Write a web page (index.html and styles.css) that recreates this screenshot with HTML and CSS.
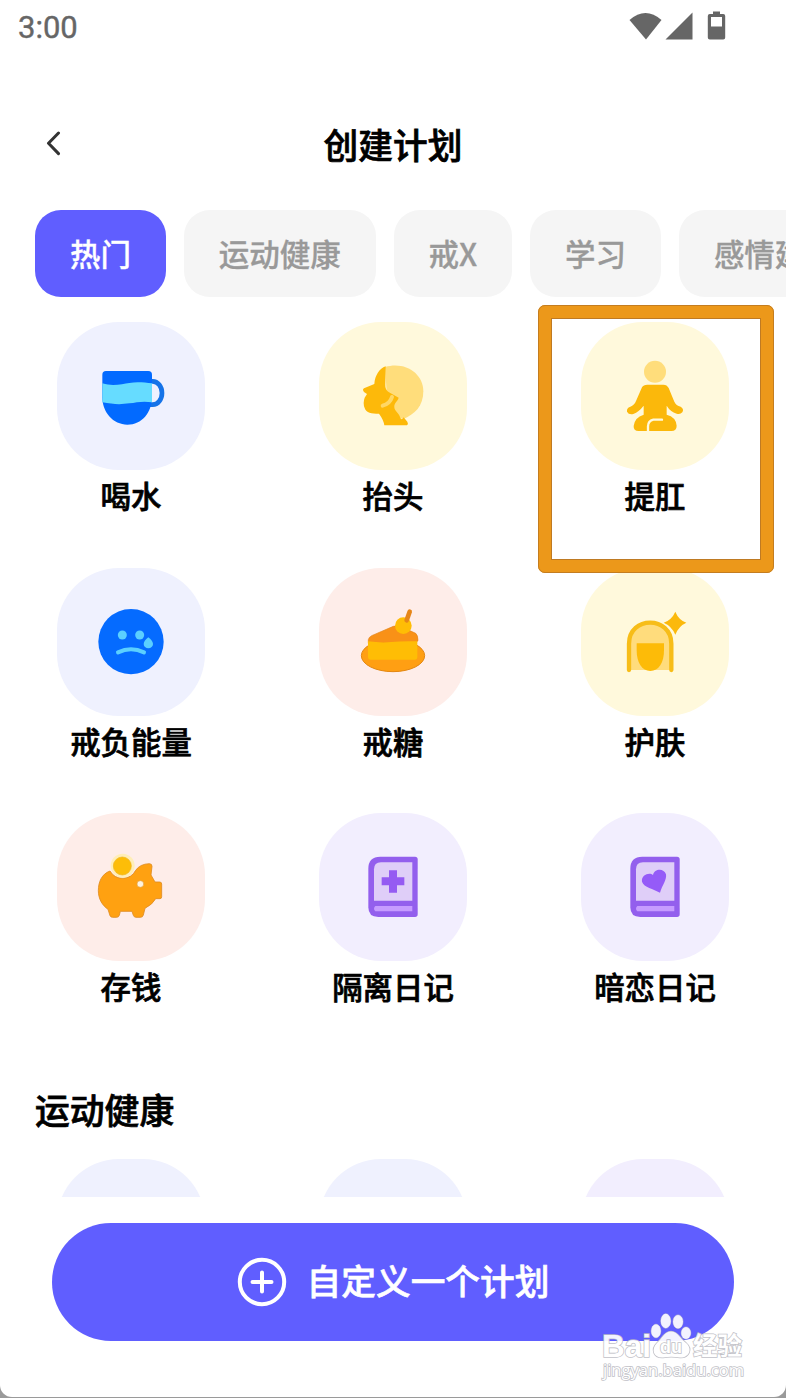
FILE: index.html
```html
<!DOCTYPE html>
<html lang="zh-CN">
<head>
  <meta charset="UTF-8" />
  <meta name="viewport" content="width=device-width, initial-scale=1.0" />
  <title>创建计划</title>
  <link rel="stylesheet" href="styles.css">
</head>
<body>
  <div class="screen">
    <!-- Status bar -->
    <div class="status-bar">
      <span class="time">3:00</span>
      <svg class="status-icons" width="100" height="32" viewBox="0 0 100 32">
        <path d="M0.500 8Q16.500 -6 32.500 8L17 27.500Z" />
        <path d="M63.500 0.500V27.500H36.500Z" />
        <path fill-rule="evenodd" d="M84 -0.500h7v2.500h3.200q2 0 2 2v21.500q0 2 -2 2h-13.400q-2 0 -2-2V4q0-2 2-2h3.200zM82 5v9.500h11V5z" />
      </svg>
    </div>

    <header class="nav">
      <svg class="back" width="18" height="26" viewBox="0 0 18 26">
        <path d="M13.500 2L3.500 12.300l10 10.300" />
      </svg>
      <h1>创建计划</h1>
    </header>

    <nav class="tabs">
      <span class="tab active">热门</span>
      <span class="tab">运动健康</span>
      <span class="tab">戒X</span>
      <span class="tab">学习</span>
      <span class="tab">感情建设</span>
    </nav>

    <main class="list">
      <section class="grid">
        <div class="plan">
          <div class="tile blue">
            <svg viewBox="21 21 444 444">
              <path d="M300 199h8a28 35 0 0 1 0 70h-12" fill="none" stroke="#1573e8" stroke-width="14" />
              <path d="M168 168H295q11 0 11 11V245C306 292 275 329 232 329S157 292 157 247V179q0-11 11-11z" fill="#026aff" />
              <path d="M157 205C190 216 218 206 238 204C262 200 284 203 306 205V262C280 257 260 262 238 265C212 269 188 268 157 262z" fill="#66dcff" />
            </svg>
          </div>
          <p>喝水</p>
        </div>
        <div class="plan">
          <div class="tile yellow">
            <svg viewBox="12 21 444 444">
              <path d="M210 156C270 138 325 175 325 229C325 273 300 298 263 313L225 290L215 230z" fill="#ffdd7b" />
              <path d="M212 154C193 161 180 181 178 207L147 220Q141 224 147 231L156 237L149 248Q143 264 149 279C154 294 169 296 192 296Q206 315 208 331H276Q281 327 277 320L266 307Q260 319 255 306C253 296 237 286 238 276C237 264 248 259 251 248L222 232Q210 225 211 209z" fill="#fdb90a" />
              <path d="M231 246Q225 266 203 272" fill="none" stroke="#ffd765" stroke-width="12" stroke-linecap="round" />
            </svg>
          </div>
          <p>抬头</p>
        </div>
        <div class="plan">
          <div class="tile yellow">
            <svg viewBox="153 81 444 444">
              <circle cx="375" cy="230" r="33" fill="#ffdd7b" />
              <path d="M352 269H400Q411 269 416 279L433 320Q438 332 452 335Q463 342 457 352Q450 360 440 356Q421 350 410 332V359Q438 366 440 392Q440 408 424 408H326Q310 408 311 393Q314 367 341 359V332Q327 350 310 357Q296 360 291 350Q289 339 301 335Q313 331 318 318L336 277Q340 269 352 269z" fill="#fbb80b" />
              <path d="M396 374H370Q354 378 354 394V410" fill="none" stroke="#fff9dc" stroke-width="7" stroke-linecap="round" />
            </svg>
          </div>
          <p>提肛</p>
          <span class="highlight"></span>
        </div>

        <div class="plan">
          <div class="tile blue">
            <svg viewBox="21 24 444 444">
              <circle cx="243" cy="245" r="98" fill="#056bff" />
              <g fill="#5bd0ff">
                <circle cx="217" cy="225" r="13.500" />
                <circle cx="269" cy="225" r="13.500" />
                <path d="M295 232Q309 243 309 252A14 13 0 0 1 281 252Q281 243 295 232z" />
              </g>
              <path d="M204 277Q243 258 282 277" fill="none" stroke="#5bd0ff" stroke-width="12" stroke-linecap="round" />
            </svg>
          </div>
          <p>戒负能量</p>
        </div>
        <div class="plan">
          <div class="tile pink">
            <svg viewBox="12 24 444 444">
              <ellipse cx="234" cy="287" rx="95" ry="48" fill="#ff9f13" stroke="#e38712" stroke-width="3" />
              <path d="M160 239Q161 232 170 227L235 199Q246 195 263 202L302 220Q309 226 309 242L300 250H160z" fill="#f99117" stroke="#e38316" stroke-width="2" />
              <path d="M159 244Q199 249 229 246T307 244V292Q307 299 299 299H166Q159 299 159 292z" fill="#ffbd05" />
              <circle cx="265" cy="197" r="25" fill="#ffbd05" />
              <path d="M275 181L284 155" stroke="#e68618" stroke-width="14" stroke-linecap="round" />
            </svg>
          </div>
          <p>戒糖</p>
        </div>
        <div class="plan">
          <div class="tile yellow">
            <svg viewBox="18 24 444 444">
              <path d="M163 330V251C163 168 288 168 288 251V330z" fill="#ffdc7c" />
              <path d="M162 330V251C162 167 289 167 289 251V330" fill="none" stroke="#f7bd18" stroke-width="13" stroke-linecap="round" />
              <path d="M185 250H267V271C267 308 251 333 226 333S185 308 185 271z" fill="#fdbb08" />
              <path d="M301 155Q311 180 334 188Q311 198 301 224Q290 198 266 188Q290 180 301 155z" fill="#fbb90c" stroke="#fff9dc" stroke-width="6" paint-order="stroke" />
            </svg>
          </div>
          <p>护肤</p>
        </div>

        <div class="plan">
          <div class="tile pink">
            <svg viewBox="21 25 444 444">
              <path d="M180 199C155 208 145 232 145 258C145 283 157 302 174 314L180 333Q182 338 188 338H200Q206 338 208 332L211 320H246L250 332Q252 338 258 338H272Q278 338 280 331L285 311Q308 299 317 282H330Q335 282 335 276V238Q335 232 329 232H315L303 211L306 185Q306 177 298 177Q270 178 257 197A44 44 0 0 1 180 199z" fill="#ffa111" stroke="#df8c20" stroke-width="2.500" />
              <circle cx="218" cy="183" r="36" fill="#ffeeb8" />
              <circle cx="217" cy="184" r="27" fill="#fdbd08" stroke="#eeb41d" stroke-width="2" />
              <circle cx="271" cy="238" r="10" fill="#fff3df" stroke="#dfa146" stroke-width="2" />
            </svg>
          </div>
          <p>存钱</p>
        </div>
        <div class="plan">
          <div class="tile purple">
            <svg viewBox="12 25 444 444">
              <path d="M196 156H300Q308 156 308 164V329Q308 337 300 337H190Q160 337 160 308V192Q160 156 196 156z" fill="#935fed" />
              <path d="M198 173H292V288H177V194Q177 173 198 173z" fill="#dfcef8" />
              <path d="M181 304H292V320H181Q173 312 181 304z" fill="#c69cff" />
              <path d="M222 197h24v21h22v24h-22v22h-24v-22h-22v-24h22z" fill="#955bf2" />
            </svg>
          </div>
          <p>隔离日记</p>
        </div>
        <div class="plan">
          <div class="tile purple">
            <svg viewBox="798 25 444 444">
              <path d="M982 156H1086Q1094 156 1094 164V329Q1094 337 1086 337H976Q946 337 946 308V192Q946 156 982 156z" fill="#935fed" />
              <path d="M984 173H1078V288H963V194Q963 173 984 173z" fill="#dfcef8" />
              <path d="M967 304H1078V320H967Q959 312 967 304z" fill="#c69cff" />
              <path d="M1014 211C1018 191 1047 189 1053 209C1056 225 1042 242 1035 264C1015 252 987 249 981 231C978 211 1003 202 1014 211z" fill="#955bf8" />
            </svg>
          </div>
          <p>暗恋日记</p>
        </div>
      </section>

      <h2>运动健康</h2>
      <section class="grid">
        <div class="plan"><div class="tile blue"></div></div>
        <div class="plan"><div class="tile blue"></div></div>
        <div class="plan"><div class="tile purple"></div></div>
      </section>
    </main>

    <footer class="footer">
      <button class="create">
        <svg width="50" height="50" viewBox="0 0 50 50">
          <circle cx="25" cy="25" r="22.200" />
          <path d="M25 15.500v19M15.500 25h19" />
        </svg>
        <span>自定义一个计划</span>
      </button>
    </footer>

    <svg class="watermark" width="150" height="72" viewBox="0 0 150 72">
      <g class="paw">
        <ellipse cx="54" cy="18" rx="4.800" ry="6.800" />
        <ellipse cx="63.800" cy="8" rx="5" ry="7.200" />
        <ellipse cx="76" cy="8.700" rx="5" ry="6.800" />
        <ellipse cx="84" cy="20" rx="4.800" ry="6" />
        <path d="M69 18.500C76 18.500 78 26 84 30C91 36 87 45 78 44.500Q69 43 61 44.500C51 45 49 36 55 30C60 26 62 18.500 69 18.500z" />
      </g>
      <text class="logo" x="0" y="44" textLength="49" lengthAdjust="spacingAndGlyphs">Bai</text>
      <text class="du" x="58" y="40">du</text>
      <text class="cn" x="91" y="42">经验</text>
      <text class="url" x="1" y="62.500" textLength="141" lengthAdjust="spacingAndGlyphs">jingyan.baidu.com</text>
    </svg>
  </div>
</body>
</html>
```
FILE: styles.css
```css
:root {
  --primary: #605eff;
  --chip: #f5f5f5;
  --blue: #eff1fe;
  --yellow: #fff9dc;
  --pink: #feede9;
  --purple: #f2eefe;
}
* {
  margin: 0;
  padding: 0;
  box-sizing: border-box;
}
body {
  background: #9a9a9a;
  font-family: "Noto Sans CJK SC", sans-serif;
  color: #000;
  overflow: hidden;
}
.screen {
  position: relative;
  width: 786px;
  height: 1397px;
  background: #fff;
  border-radius: 0 0 12px 12px;
  overflow: hidden;
  display: flex;
  flex-direction: column;
}
/* Status bar */
.status-bar {
  height: 80px;
  padding: 12px 57px 0 18px;
  display: flex;
  justify-content: space-between;
  align-items: flex-start;
}
.time {
  font-family: Roboto, sans-serif;
  font-size: 31px;
  line-height: 32px;
  color: #666;
  -webkit-text-stroke: 0.4px;
}
.status-icons {
  fill: #666;
  overflow: visible;
}
/* Title */
.nav {
  height: 130px;
  padding: 0 45px 3px;
  display: grid;
  grid-template-columns: 18px 1fr 18px;
  align-items: center;
}
.back {
  fill: none;
  stroke: #333;
  stroke-width: 3;
  stroke-linecap: round;
  stroke-linejoin: round;
}
h1 {
  font-size: 34.7px;
  font-weight: 500;
  text-align: center;
  -webkit-text-stroke: 0.7px;
}
/* Category tabs */
.tabs {
  display: flex;
  flex-shrink: 0;
  gap: 17.8px;
  height: 87px;
  padding-left: 35px;
}
.tab {
  flex-shrink: 0;
  padding: 0 35px;
  border-radius: 26px;
  background: var(--chip);
  color: #999;
  font-size: 30.5px;
  font-weight: 500;
  line-height: 86px;
  white-space: nowrap;
  -webkit-text-stroke: 0.3px;
}
.tab.active {
  background: var(--primary);
  color: #fff;
}
/* Plans */
.list {
  height: 900px;
  padding-top: 25px;
  clip-path: inset(0);
}
.grid {
  display: grid;
  grid-template-columns: repeat(3, 1fr);
  grid-auto-rows: 245.7px;
}
.plan {
  position: relative;
  display: flex;
  flex-direction: column;
  align-items: center;
}
.tile {
  width: 148px;
  height: 148px;
  border-radius: 62px;
}
.tile svg {
  display: block;
}
.tile.blue { background: var(--blue); }
.tile.yellow { background: var(--yellow); }
.tile.pink { background: var(--pink); }
.tile.purple { background: var(--purple); }
.plan p {
  font-size: 30.4px;
  font-weight: 500;
  line-height: 51px;
  -webkit-text-stroke: 0.7px;
}
.highlight {
  position: absolute;
  z-index: 2;
  top: -17px;
  left: 14px;
  width: 236px;
  height: 268px;
  border: 13px solid #ec981a;
  border-radius: 7px;
  box-shadow: 0 0 0 1px #bf7a22 inset;
  outline: 1px solid #c47d20;
  outline-offset: -1px;
}
h2 {
  height: 100px;
  padding-left: 35px;
  font-size: 34.8px;
  font-weight: 500;
  line-height: 101px;
  -webkit-text-stroke: 0.7px;
}
/* Bottom button */
.footer {
  padding: 26px 52px 0;
}
.create {
  width: 100%;
  height: 118px;
  border: none;
  border-radius: 59px;
  background: var(--primary);
  color: #fff;
  font-family: inherit;
  font-size: 34.7px;
  font-weight: 500;
  display: flex;
  align-items: center;
  justify-content: center;
  gap: 20px;
}
.create span {
  padding-bottom: 4px;
  -webkit-text-stroke: 0.6px;
}
.create svg {
  fill: none;
  stroke: #fff;
  stroke-width: 4;
  stroke-linecap: round;
}
/* Watermark */
.watermark {
  position: absolute;
  left: 602px;
  top: 1313px;
  fill: #fff;
  stroke: #bdbdc4;
  stroke-width: 1.6px;
  paint-order: stroke;
  overflow: visible;
  opacity: 0.93;
}
.watermark .paw ellipse {
  stroke-width: 0.8px;
}
.watermark .logo {
  font: bold 32px "Liberation Sans", sans-serif;
}
.watermark .du {
  font: bold 18px "Liberation Sans", sans-serif;
}
.watermark .cn {
  font: bold 24.5px "Noto Sans CJK SC", sans-serif;
}
.watermark .url {
  font: 16px "Open Sans", sans-serif;
}
```
